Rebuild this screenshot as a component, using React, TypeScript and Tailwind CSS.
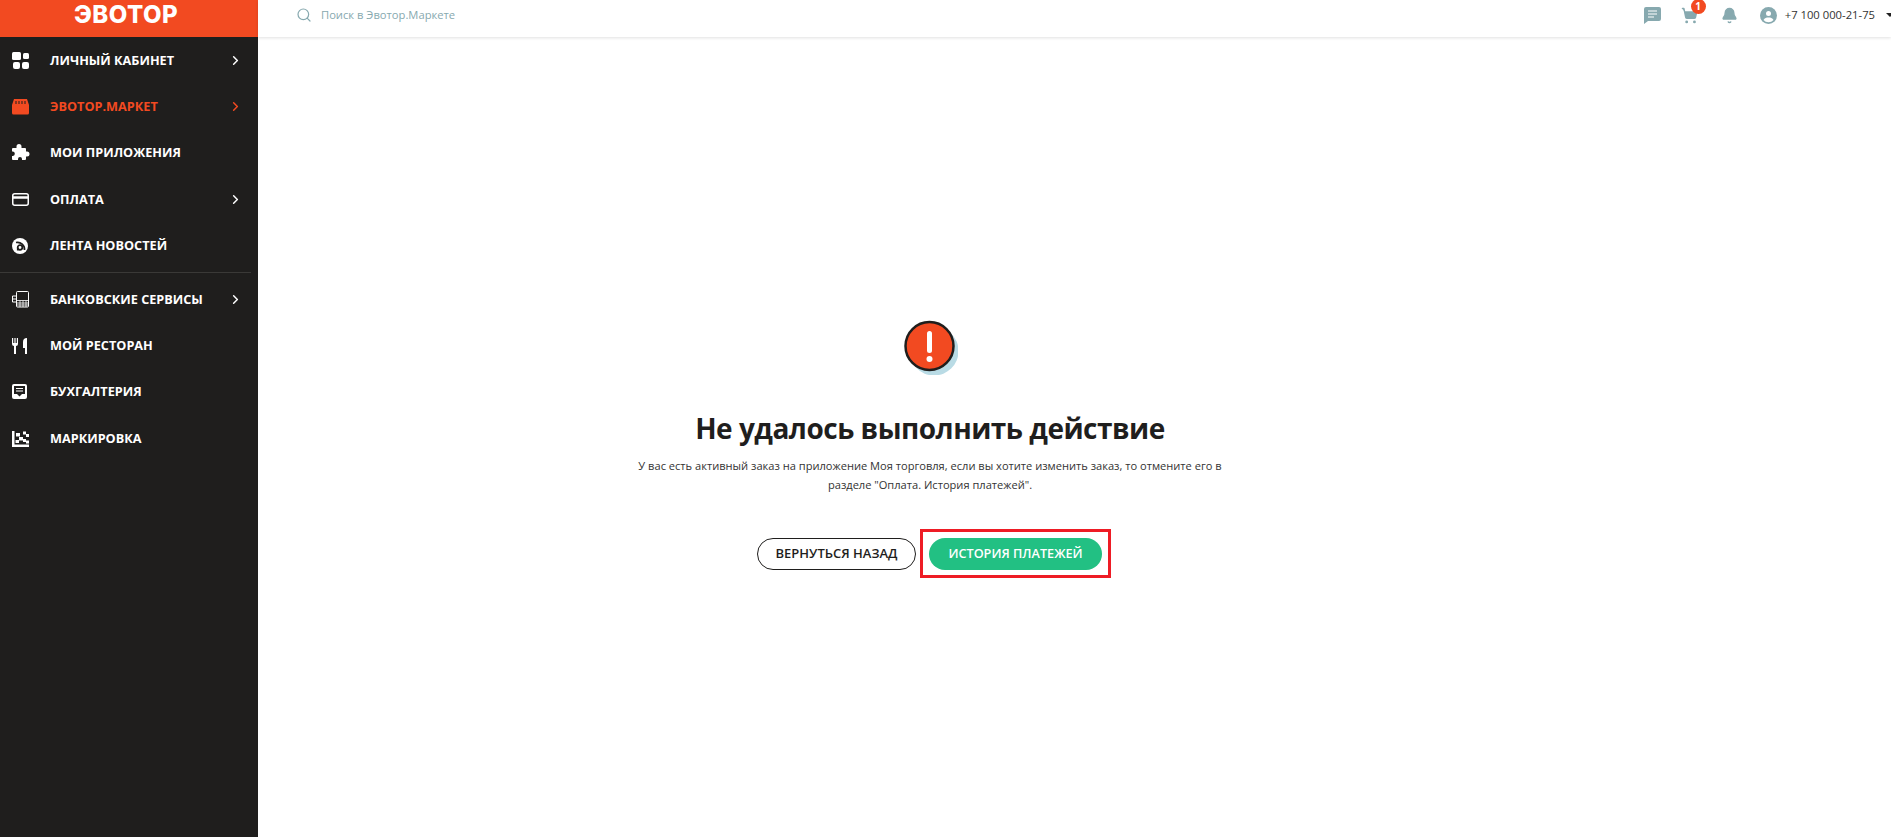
import React from "react";
import { ChevronRight, Search, ShoppingCart, Bell } from "lucide-react";

const font = "font-['Open_Sans',sans-serif]";

function GridIcon() {
    return (
        <svg width="17" height="17" viewBox="0 0 17 17" fill="currentColor">
            <rect x="0" y="0" width="9" height="8" rx="1.5" />
            <rect x="11" y="1" width="6" height="6" rx="1.5" />
            <rect x="1" y="10" width="7" height="7" rx="2" />
            <rect x="10" y="10" width="7" height="7" rx="2" />
        </svg>
    );
}

function ShopIcon() {
    return (
        <svg width="17" height="17" viewBox="0 0 17 17" fill="currentColor">
            <path d="M2 1h13l2 6v8a1.500 1.500 0 0 1-1.500 1.500h-14A1.500 1.500 0 0 1 0 15V7z" />
            <path d="M4 3v3M7 3v3M10 3v3M13 3v3" stroke="#1f1e1d" strokeWidth="1" />
        </svg>
    );
}

function PuzzleIcon() {
    return (
        <svg width="18" height="17" viewBox="0 0 18 17" fill="currentColor">
            <path d="M7 0a2.500 2.500 0 0 1 2.500 2.500V4H13a1 1 0 0 1 1 1v2.500h1a2.500 2.500 0 0 1 0 5h-1V15a1 1 0 0 1-1 1h-3v-1a2 2 0 0 0-4 0v1H1a1 1 0 0 1-1-1v-3h1a2.300 2.300 0 0 0 0-4.500H0V5a1 1 0 0 1 1-1h3.500V2.500A2.500 2.500 0 0 1 7 0z" />
        </svg>
    );
}

function CardIcon() {
    return (
        <svg width="17" height="13" viewBox="0 0 17 13" fill="none" stroke="currentColor">
            <rect x="0.750" y="0.750" width="15.500" height="11.500" rx="2" strokeWidth="1.500" />
            <path d="M1 4.500h15" strokeWidth="2.500" />
        </svg>
    );
}

function RssIcon() {
    return (
        <svg width="16" height="16" viewBox="0 0 16 16">
            <circle cx="8" cy="8" r="8" fill="currentColor" />
            <circle cx="8" cy="9.500" r="2.300" fill="none" stroke="#1f1e1d" strokeWidth="1.700" />
            <path d="M4 4.500a7 7 0 0 1 8.500 7.500" fill="none" stroke="#1f1e1d" strokeWidth="1.700" />
            <path d="M5.700 9.500v3" stroke="#1f1e1d" strokeWidth="1.600" />
        </svg>
    );
}

function TerminalIcon() {
    return (
        <svg width="17" height="17" viewBox="0 0 17 17" fill="none" stroke="currentColor">
            <rect x="4.500" y="0.500" width="12" height="15.500" rx="1" />
            <path d="M5 9.500h11M5 12h11M5 14h11M8 9.500V16M11 9.500V16M14 9.500V16" strokeWidth="0.800" />
            <path d="M4.500 5H0.500v6h4M1 8h3" />
        </svg>
    );
}

function ForkIcon() {
    return (
        <svg width="16" height="16" viewBox="0 0 16 16" fill="currentColor">
            <path d="M0 0h1.200v5h1.200V0h1.200v5h1.200V0H6v6a2 2 0 0 1-2 2v8H2V8a2 2 0 0 1-2-2z" />
            <path d="M15 0v16h-2v-6h-2V4a4 4 0 0 1 4-4z" />
        </svg>
    );
}

function InboxIcon() {
    return (
        <svg width="15" height="15" viewBox="0 0 15 15">
            <rect width="15" height="15" rx="2" fill="currentColor" />
            <rect x="2" y="2" width="11" height="8" fill="#1f1e1d" />
            <path d="M4 4.500h7M4 7h7" stroke="currentColor" />
            <path d="M5 10l2.500 2.500L10 10z" fill="#1f1e1d" />
        </svg>
    );
}

function MarkIcon() {
    return (
        <svg width="17" height="17" viewBox="0 0 17 17" fill="currentColor">
            <path d="M0 1h2.500v16H0zM2 14.500h15V17H2zM4 3h4v3.500H4zM11 1.500h3v3h-3zM14 4h3v3h-3zM7 7h4v3.500H7zM11 9h3v3h-3zM3.500 10h3.500v3H3.500zM14 10.500h3v3h-3z" />
        </svg>
    );
}

const menuTop = [
    { label: "ЛИЧНЫЙ КАБИНЕТ", icon: <GridIcon />, arrow: true },
    { label: "ЭВОТОР.МАРКЕТ", icon: <ShopIcon />, arrow: true, active: true },
    { label: "МОИ ПРИЛОЖЕНИЯ", icon: <PuzzleIcon /> },
    { label: "ОПЛАТА", icon: <CardIcon />, arrow: true },
    { label: "ЛЕНТА НОВОСТЕЙ", icon: <RssIcon /> },
];

const menuBottom = [
    { label: "БАНКОВСКИЕ СЕРВИСЫ", icon: <TerminalIcon />, arrow: true },
    { label: "МОЙ РЕСТОРАН", icon: <ForkIcon /> },
    { label: "БУХГАЛТЕРИЯ", icon: <InboxIcon /> },
    { label: "МАРКИРОВКА", icon: <MarkIcon /> },
];

function MenuRow({ item }: { item: { label: string; icon: React.ReactNode; arrow?: boolean; active?: boolean } }) {
    return (
        <div className={`flex h-[46.4px] items-center pl-3 pr-[15px] ${item.active ? "text-[#f24a21]" : "text-white"}`}>
            <span className="flex w-[38px] shrink-0 items-center">{item.icon}</span>
            <span className="flex-1 whitespace-nowrap text-[12.7px] font-bold">{item.label}</span>
            {item.arrow && <ChevronRight size={15} strokeWidth={2.4} />}
        </div>
    );
}

export default function App() {
    return (
        <div className={`flex h-[837px] w-[1891px] overflow-hidden bg-white ${font}`}>
            {/* Sidebar */}
            <aside className="flex w-[258px] shrink-0 flex-col bg-[#1f1e1d]">
                <div className="flex h-[37px] items-center justify-center bg-[#f24a21] pr-[6px] pb-[8px]">
                    <span className="font-['Inter',sans-serif] text-[24px] leading-[29px] font-extrabold tracking-[0.5px] text-white">ЭВОТОР</span>
                </div>
                <nav>
                    {menuTop.map((item) => (
                        <MenuRow key={item.label} item={item} />
                    ))}
                    <div className="my-[3px] mr-[7px] border-t border-[#3a3937]" />
                    {menuBottom.map((item) => (
                        <MenuRow key={item.label} item={item} />
                    ))}
                </nav>
            </aside>

            <div className="flex min-w-0 flex-1 flex-col">
                {/* Header */}
                <header className="flex h-[37px] shrink-0 items-center pb-[7px] pl-[38px] shadow-[0_1px_3px_rgba(0,0,0,0.12)]">
                    <Search size={16} strokeWidth={1.8} className="text-[#87a9af]" />
                    <span className="ml-[9px] text-[11.2px] text-[#87a9af]">Поиск в Эвотор.Маркете</span>
                    <div className="ml-auto flex items-center text-[#87a9af]">
                        <svg width="17" height="17" viewBox="0 0 17 17" fill="currentColor">
                            <path d="M2 0h13a2 2 0 0 1 2 2v10a2 2 0 0 1-2 2H4l-4 3V2a2 2 0 0 1 2-2z" />
                            <path d="M4 4h9M4 7h9M4 10h6" stroke="#fff" strokeWidth="1.200" />
                        </svg>
                        <div className="relative ml-[20px]">
                            <ShoppingCart size={17} fill="currentColor" />
                            <span className="absolute -top-[8px] left-[10px] flex h-[15px] w-[15px] items-center justify-center rounded-full bg-[#f24a21] text-[10px] font-bold text-white">1</span>
                        </div>
                        <Bell size={17} fill="currentColor" className="ml-[23px]" />
                        <svg className="ml-[22px]" width="17" height="17" viewBox="0 0 17 17">
                            <circle cx="8.500" cy="8.500" r="8.500" fill="currentColor" />
                            <circle cx="8.500" cy="6.500" r="2.500" fill="#fff" />
                            <path d="M3.500 13c1-2 3-2.500 5-2.500s4 .5 5 2.500a6.500 6.500 0 0 1-10 0z" fill="#fff" />
                        </svg>
                        <span className="ml-[8px] text-[11.25px] whitespace-nowrap text-[#333]">+7 100 000-21-75</span>
                        <span className="-mr-[3px] ml-[11px] h-0 w-0 border-x-[4px] border-t-[4px] border-x-transparent border-t-[#222]" />
                    </div>
                </header>

                {/* Error content */}
                <main className="flex flex-1 flex-col items-center pt-[282px] pr-[289px]">
                    <svg width="56" height="56" viewBox="0 0 56 56">
                        <circle cx="32" cy="32" r="24.500" fill="#b9dbe5" />
                        <circle cx="27.500" cy="27" r="24" fill="#f24a21" stroke="#1f1e1d" strokeWidth="2.500" />
                        <rect x="25" y="12" width="5" height="22" rx="2.500" fill="#fff" />
                        <circle cx="27.500" cy="40" r="3" fill="#fff" />
                    </svg>
                    <h1 className="mt-[33px] text-[28px] leading-[40px] font-bold tracking-[-0.5px] whitespace-nowrap text-[#1f1e1d]">Не удалось выполнить действие</h1>
                    <p className="mt-[8px] w-[600px] text-center text-[11.1px] leading-[19px] text-[#333]">
                        У вас есть активный заказ на приложение Моя торговля, если вы хотите изменить заказ, то отмените его в разделе "Оплата. История платежей".
                    </p>
                    <div className="mt-[35px] ml-[8px] flex items-center">
                        <button className="h-[32px] w-[159px] rounded-full border border-[#1f1e1d] text-[13px] font-semibold text-[#1f1e1d]">ВЕРНУТЬСЯ НАЗАД</button>
                        <div className="ml-[4px] flex h-[49px] w-[191px] items-center justify-center border-[3px] border-[#ee1c25]">
                            <button className="h-[32px] w-[173px] rounded-full bg-[#22c083] text-[12.7px] font-semibold text-white">ИСТОРИЯ ПЛАТЕЖЕЙ</button>
                        </div>
                    </div>
                </main>
            </div>
        </div>
    );
}
